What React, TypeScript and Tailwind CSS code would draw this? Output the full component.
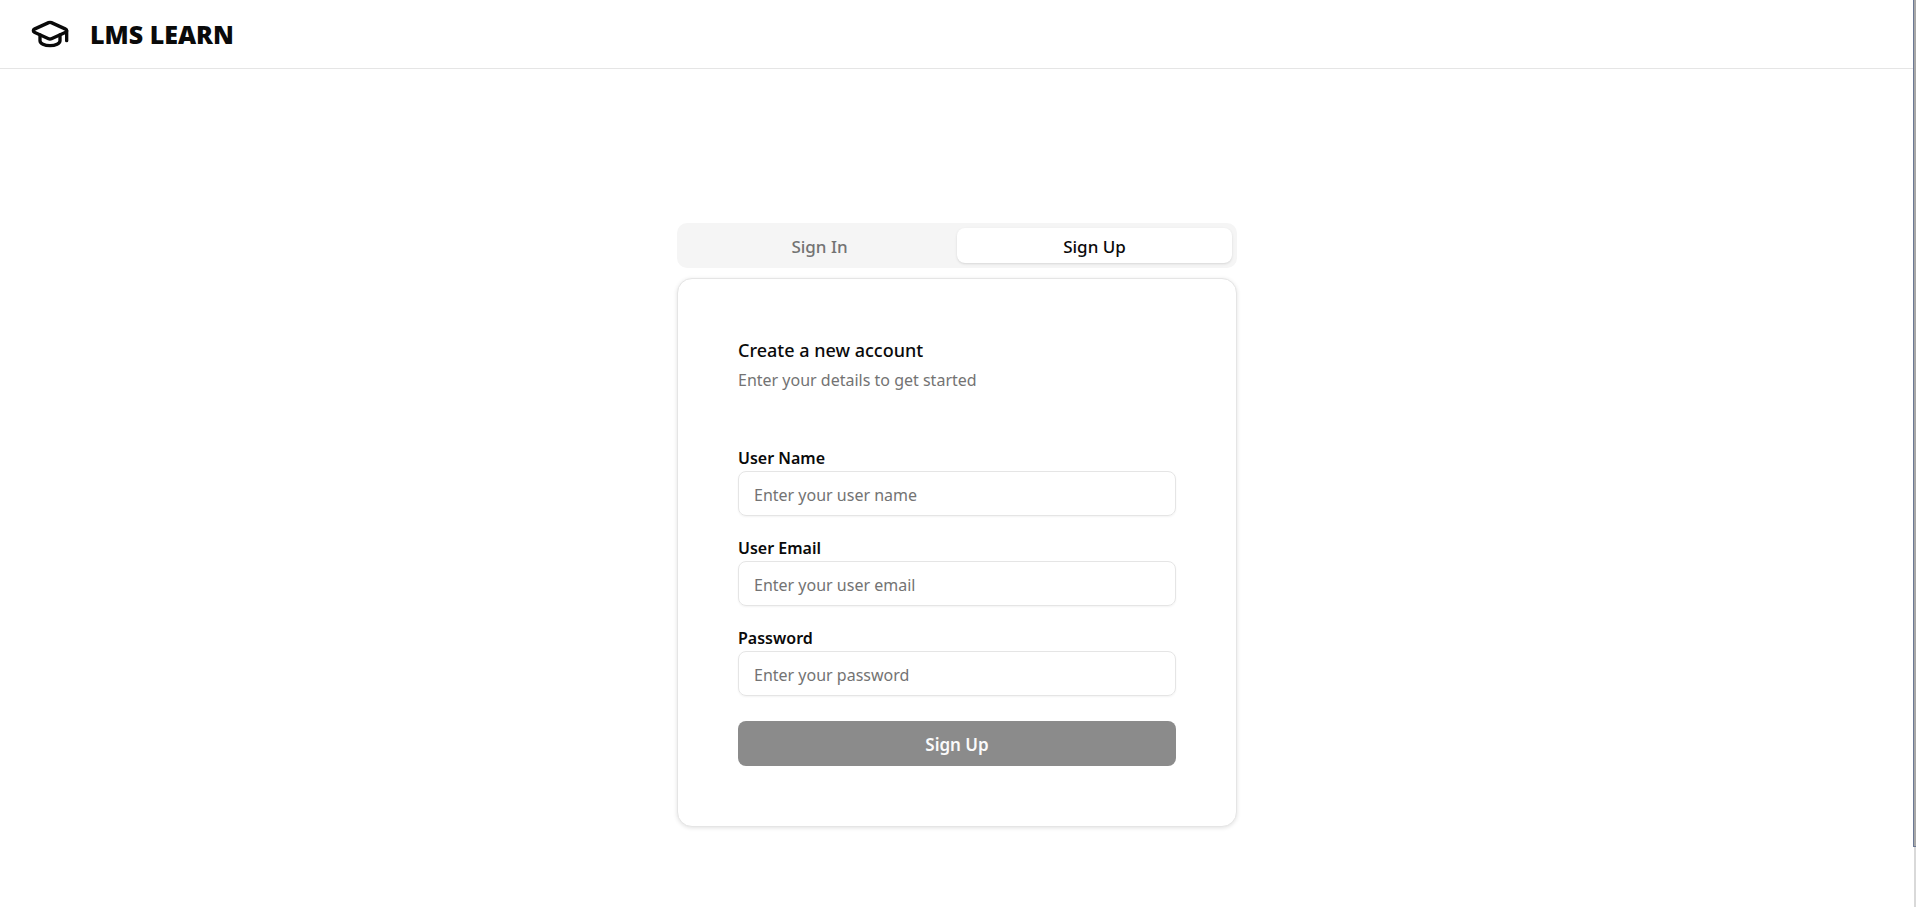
import { useState } from "react";
import { GraduationCap } from "lucide-react";

const fields = [
  { id: "userName", label: "User Name", type: "text", placeholder: "Enter your user name" },
  { id: "userEmail", label: "User Email", type: "email", placeholder: "Enter your user email" },
  { id: "password", label: "Password", type: "password", placeholder: "Enter your password" },
];

const tabs = ["Sign In", "Sign Up"];

function Header() {
  return (
    <header className="flex h-[69px] items-center border-b border-neutral-200 px-[30px]">
      <a href="#" className="flex items-center gap-5">
        <GraduationCap className="size-10" />
        <span className="font-['Open_Sans',sans-serif] text-[25px] leading-8 font-extrabold">LMS LEARN</span>
      </a>
    </header>
  );
}

function SignUpCard() {
  return (
    <section className="rounded-[15px] border border-neutral-200 bg-white px-[60px] pt-[59px] pb-[60px] shadow-[0_1px_4px_rgba(0,0,0,0.12)]">
      <div className="flex flex-col gap-[5px]">
        <h1 className="text-lg leading-[25px] font-medium">Create a new account</h1>
        <p className="text-base leading-[25px] text-neutral-500">Enter your details to get started</p>
      </div>
      <form className="mt-[53px]" onSubmit={(e) => e.preventDefault()}>
        <div className="flex flex-col gap-5">
          {fields.map((field) => (
            <div key={field.id} className="flex flex-col">
              <label htmlFor={field.id} className="text-base leading-[25px] font-semibold">
                {field.label}
              </label>
              <input
                id={field.id}
                name={field.id}
                type={field.type}
                placeholder={field.placeholder}
                className="h-[45px] w-full rounded-lg border border-neutral-200 px-[15px] pt-0.5 text-base shadow-xs outline-none placeholder:text-neutral-500"
              />
            </div>
          ))}
        </div>
        <button
          type="submit"
          disabled
          className="mt-[25px] h-[45px] w-full rounded-lg bg-[#8b8b8b] pt-0.5 text-[17px] font-semibold text-neutral-50"
        >
          Sign Up
        </button>
      </form>
    </section>
  );
}

export default function App() {
  const [active, setActive] = useState("Sign Up");
  return (
    <div className="min-h-screen bg-white pr-0.5 font-['Noto_Sans',sans-serif] text-neutral-950">
      <Header />
      <main className="mx-auto flex w-full max-w-[560px] flex-col gap-2.5 pt-[154px]">
        <div role="tablist" className="grid h-[45px] grid-cols-2 rounded-[10px] bg-neutral-100 p-[5px]">
          {tabs.map((tab) => (
            <button
              key={tab}
              type="button"
              role="tab"
              aria-selected={active === tab}
              onClick={() => setActive(tab)}
              className="rounded-lg pt-0.5 text-[17px] leading-6 font-medium text-neutral-500 aria-selected:bg-white aria-selected:text-neutral-950 aria-selected:shadow-sm"
            >
              {tab}
            </button>
          ))}
        </div>
        <SignUpCard />
      </main>
      <div aria-hidden="true" className="fixed inset-y-0 right-0 w-[3px] border-l border-white bg-[#d9d9d9]">
        <div className="-ml-px h-[847px] border-b border-l border-[#6b7894] bg-[#a8a8a8]" />
      </div>
    </div>
  );
}
